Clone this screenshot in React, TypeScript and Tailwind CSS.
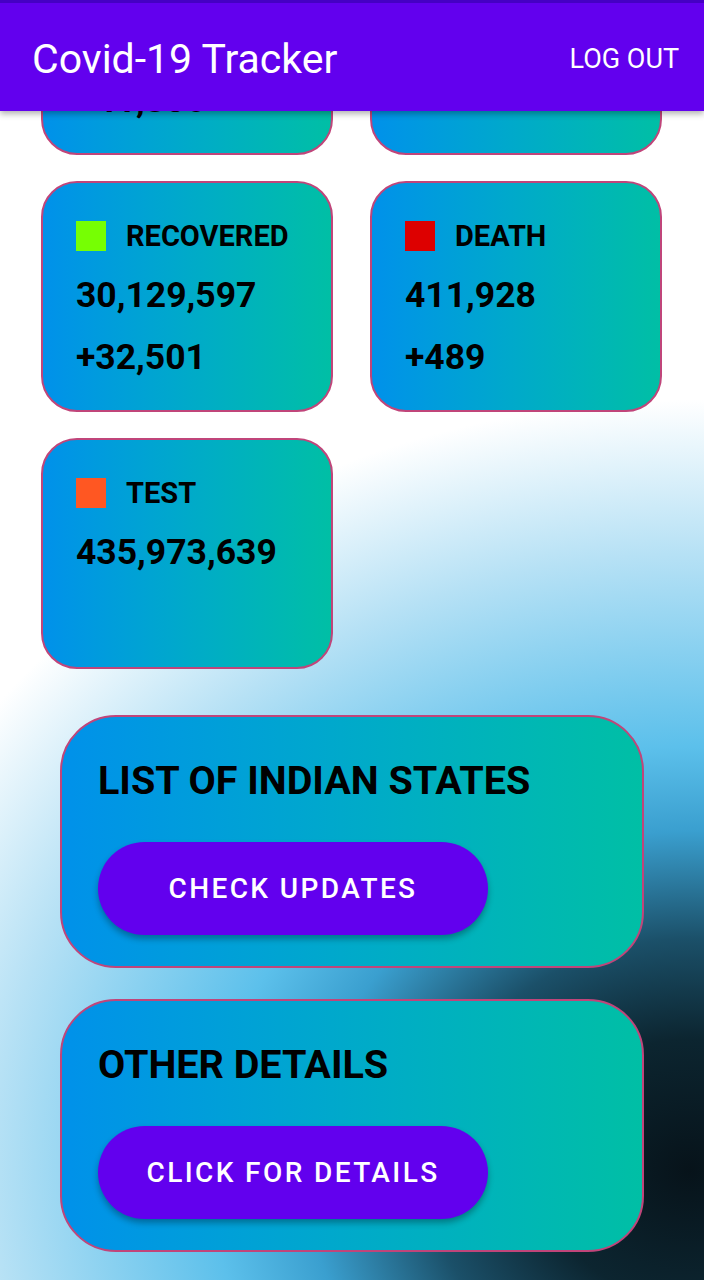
const stats = [
  { label: "CONFIRMED", color: "bg-[#2979ff]", total: "31,026,829", delta: "+41,806" },
  { label: "ACTIVE", color: "bg-[#ffd600]", total: "485,304", delta: "" },
  { label: "RECOVERED", color: "bg-[#76ff03]", total: "30,129,597", delta: "+32,501" },
  { label: "DEATH", color: "bg-[#dd0000]", total: "411,928", delta: "+489" },
  { label: "TEST", color: "bg-[#ff5722]", total: "435,973,639", delta: "" },
];

const StatCard = ({ label, color, total, delta }: (typeof stats)[number]) => (
  <div className="h-[231px] rounded-[36px] border-2 border-[#c0457a] bg-gradient-to-r from-[#0091ea] to-[#00bfa5] pl-[33px] pt-[38px] text-black">
    <div className="flex h-[30px] items-center gap-5">
      <span className={`h-[30px] w-[30px] ${color}`} />
      <span className="text-[29px] font-bold leading-none">{label}</span>
    </div>
    <div className="mt-[22px] text-[35.5px] font-bold leading-[44px]">{total}</div>
    {delta && <div className="mt-[18px] text-[35.5px] font-bold leading-[44px]">{delta}</div>}
  </div>
);

const ActionCard = ({ title, action }: { title: string; action: string }) => (
  <div className="h-[253px] w-[584px] rounded-[56px] border-2 border-[#c0457a] bg-gradient-to-r from-[#0091ea] to-[#00bfa5] pl-9 pt-10">
    <h2 className="text-[39.5px] font-bold leading-[48px] text-black">{title}</h2>
    <button className="mt-[37px] flex h-[93px] w-[390px] items-center justify-center rounded-full bg-[#6200ee] text-[28px] font-medium tracking-[2.4px] text-white shadow-[0_4px_6px_rgba(0,0,0,0.3)]">
      {action}
    </button>
  </div>
);

export default function App() {
  return (
    <div className="relative h-[1280px] w-[704px] overflow-hidden bg-[radial-gradient(ellipse_870px_770px_at_690px_1170px,#07131a_0%,#0c2530_17%,#1b5069_30%,#3a9fcf_44%,#5cc0eb_55%,#b6e1f5_80%,#ffffff_100%)] font-['Roboto',sans-serif]">
      {/* scrolled content */}
      <div className="-mt-[76px] flex flex-col">
        <div className="grid grid-cols-[292px_292px] gap-x-[37px] gap-y-[26px] pl-[41px]">
          {stats.map((s) => (
            <StatCard key={s.label} {...s} />
          ))}
        </div>
        <div className="mt-[46px] flex flex-col gap-[31px] pl-[60px]">
          <ActionCard title="LIST OF INDIAN STATES" action="CHECK UPDATES" />
          <ActionCard title="OTHER DETAILS" action="CLICK FOR DETAILS" />
        </div>
      </div>

      {/* app bar */}
      <header className="absolute inset-x-0 top-0 flex h-[111px] items-center justify-between border-t-[3px] border-[#4500c4] bg-[#6200ee] pl-8 pr-[25px] pt-1 shadow-[0_3px_6px_rgba(0,0,0,0.3)]">
        <h1 className="text-[41px] leading-none text-white">Covid-19 Tracker</h1>
        <button className="text-[27px] leading-none text-white">LOG OUT</button>
      </header>
    </div>
  );
}
